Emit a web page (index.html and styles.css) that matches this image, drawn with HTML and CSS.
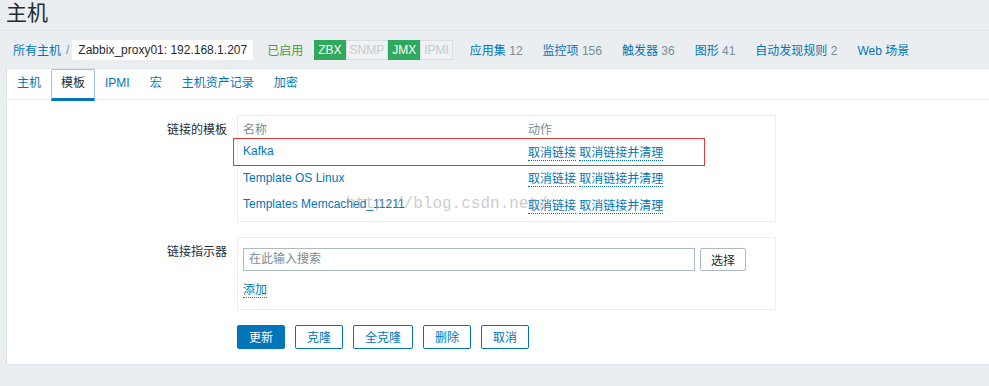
FILE: index.html
```html
<!DOCTYPE html>
<html lang="zh-CN">
<head>
    <meta charset="UTF-8">
    <title>主机</title>
    <link rel="stylesheet" href="styles.css">
</head>
<body>
    <div class="header">
        <h1>主机</h1>
    </div>
    <div class="host-nav">
        <a class="link" href="#">所有主机</a>
        <span class="sep">/</span>
        <span class="host-name">Zabbix_proxy01: 192.168.1.207</span>
        <span class="status-on">已启用</span>
        <span class="badges">
            <span class="badge on">ZBX</span>
            <span class="badge">SNMP</span>
            <span class="badge on">JMX</span>
            <span class="badge">IPMI</span>
        </span>
        <a class="nav-item" href="#">应用集 <span class="count">12</span></a>
        <a class="nav-item" href="#">监控项 <span class="count">156</span></a>
        <a class="nav-item" href="#">触发器 <span class="count">36</span></a>
        <a class="nav-item" href="#">图形 <span class="count">41</span></a>
        <a class="nav-item" href="#">自动发现规则 <span class="count">2</span></a>
        <a class="nav-item" href="#">Web 场景</a>
    </div>

    <div class="panel">
        <ul class="tabs">
            <li>主机</li>
            <li class="active">模板</li>
            <li>IPMI</li>
            <li>宏</li>
            <li>主机资产记录</li>
            <li>加密</li>
        </ul>

        <div class="form">
            <div class="form-row">
                <label>链接的模板</label>
                <div class="box">
                    <table class="tpl-table">
                        <tr>
                            <th class="col-name">名称</th>
                            <th>动作</th>
                        </tr>
                        <tr>
                            <td><a class="tpl" href="#">Kafka</a></td>
                            <td><a class="action" href="#">取消链接</a> <a class="action" href="#">取消链接并清理</a></td>
                        </tr>
                        <tr>
                            <td><a class="tpl" href="#">Template OS Linux</a></td>
                            <td><a class="action" href="#">取消链接</a> <a class="action" href="#">取消链接并清理</a></td>
                        </tr>
                        <tr>
                            <td><a class="tpl" href="#">Templates Memcached_11211</a></td>
                            <td><a class="action" href="#">取消链接</a> <a class="action" href="#">取消链接并清理</a></td>
                        </tr>
                    </table>
                    <span class="mark"></span>
                    <span class="watermark">http://blog.csdn.net/</span>
                </div>
            </div>

            <div class="form-row">
                <label>链接指示器</label>
                <div class="box box-link">
                    <div class="search">
                        <input type="text" placeholder="在此输入搜索">
                        <button class="btn-grey">选择</button>
                    </div>
                    <a class="action add" href="#">添加</a>
                </div>
            </div>

            <div class="form-row last">
                <span></span>
                <div class="buttons">
                    <button class="btn main">更新</button>
                    <button class="btn">克隆</button>
                    <button class="btn">全克隆</button>
                    <button class="btn">删除</button>
                    <button class="btn">取消</button>
                </div>
            </div>
        </div>
    </div>
</body>
</html>
```

FILE: styles.css
```css
body {
    margin: 0;
    background-color: #ebeef0;
    font-family: "Liberation Sans", Arial, "Noto Sans CJK SC", sans-serif;
    font-size: 12px;
    color: #1f2c33;
}
a {
    text-decoration: none;
}
.header {
    height: 30px;
    border-bottom: 1px solid #dfe4e7;
}
.header h1 {
    margin: 0;
    padding-left: 6px;
    font-size: 21px;
    font-weight: normal;
    line-height: 26px;
}
.host-nav {
    height: 37px;
    display: flex;
    align-items: center;
    padding-left: 13px;
}
.link {
    color: #0275b8;
}
.sep {
    color: #768d99;
    margin: 0 3px 0 5px;
}
.host-name {
    background-color: #fff;
    padding: 0 6px;
    height: 20px;
    line-height: 20px;
    font-size: 12px;
}
.status-on {
    color: #429e47;
    margin-left: 14px;
}
.badges {
    display: flex;
    margin-left: 11px;
    margin-right: 17px;
}
.badge {
    height: 18px;
    line-height: 18px;
    padding: 0 3px;
    border: 1px solid #dcdfe1;
    background-color: #f0f2f3;
    color: #c5cbce;
    font-size: 12px;
}
.badge.on {
    background-color: #2fa95e;
    border-color: #2fa95e;
    color: #fff;
}
.nav-item {
    color: #0275b8;
    margin-right: 20px;
}
.count {
    color: #768d99;
}
.panel {
    margin-left: 6px;
    background-color: #fff;
    border: 1px solid #dfe4e7;
    border-right: none;
    padding-bottom: 15px;
}
.tabs {
    list-style: none;
    margin: 0;
    padding: 0;
    display: flex;
    height: 30px;
    border-bottom: 1px solid #ebeef0;
}
.tabs li {
    padding: 0 10px;
    line-height: 29px;
    color: #0275b8;
    box-sizing: border-box;
}
.tabs li.active {
    color: #1f2c33;
    border: 1px solid #9ac2f7;
    border-bottom: 3px solid #0275b8;
    border-radius: 2px 2px 0 0;
    line-height: 27px;
    padding: 0 9px;
    height: 32px;
}
.form {
    padding-top: 15px;
}
.form-row {
    display: grid;
    grid-template-columns: 220px 539px;
    column-gap: 10px;
    margin-bottom: 15px;
}
.form-row.last {
    margin-bottom: 0;
}
.form-row label {
    text-align: right;
    padding-top: 5px;
}
.box {
    position: relative;
    border: 1px solid #ebeef0;
    padding: 2px 5px 3px 5px;
}
.tpl-table {
    border-collapse: collapse;
    width: 100%;
}
.tpl-table th {
    text-align: left;
    font-weight: normal;
    color: #768d99;
    height: 20px;
    padding: 0;
}
.tpl-table td {
    height: 26.5px;
    padding: 0;
}
.col-name {
    width: 285px;
}
.tpl {
    color: #0275b8;
}
.action {
    color: #0275b8;
    border-bottom: 1px dotted #0275b8;
}
.mark {
    position: absolute;
    left: -5px;
    top: 22px;
    width: 470px;
    height: 26px;
    border: 1px solid #e53935;
}
.watermark {
    position: absolute;
    left: 108px;
    top: 79px;
    font-family: "Liberation Mono", monospace;
    font-size: 16px;
    color: rgba(160, 160, 160, 0.55);
    pointer-events: none;
}
.box-link {
    padding: 10px 5px 11px 5px;
}
.search {
    display: flex;
    gap: 5px;
}
.search input {
    width: 452px;
    height: 23px;
    box-sizing: border-box;
    border: 1px solid #acbbc2;
    padding: 0 5px;
    font-family: inherit;
    font-size: 12px;
    margin: 0;
}
.search input::placeholder {
    color: #768d99;
}
.btn-grey {
    height: 23px;
    width: 46px;
    background-color: #fff;
    border: 1px solid #acbbc2;
    border-radius: 2px;
    font-family: inherit;
    font-size: 12px;
    color: #1f2c33;
    padding: 0;
}
.add {
    display: inline-block;
    margin-top: 12px;
    line-height: 14px;
}
.buttons {
    display: flex;
    gap: 10px;
}
.btn {
    height: 24px;
    padding: 0 11px;
    background-color: #fff;
    border: 1px solid #0275b8;
    border-radius: 2px;
    color: #0275b8;
    font-family: inherit;
    font-size: 12px;
}
.btn.main {
    background-color: #0275b8;
    color: #fff;
}
```
